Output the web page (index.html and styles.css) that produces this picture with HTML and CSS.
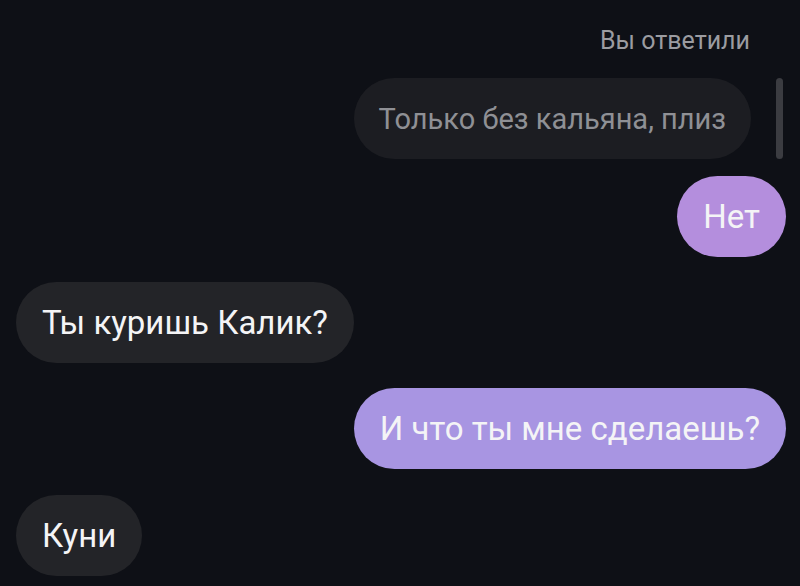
FILE: index.html
```html
<!DOCTYPE html>
<html lang="ru">
<head>
<meta charset="utf-8">
<link rel="stylesheet" href="styles.css">
</head>
<body>
<div class="chat">
  <div class="reply-label">Вы ответили</div>
  <div class="row right quote-row">
    <div class="bubble quote">Только без кальяна, плиз</div>
    <div class="quote-bar"></div>
  </div>
  <div class="row right first-out">
    <div class="bubble out pink">Нет</div>
  </div>
  <div class="row left">
    <div class="bubble in">Ты куришь Калик?</div>
  </div>
  <div class="row right">
    <div class="bubble out violet">И что ты мне сделаешь?</div>
  </div>
  <div class="row left last">
    <div class="bubble in">Куни</div>
  </div>
</div>
</body>
</html>
```

FILE: styles.css
```css
html, body {
  margin: 0;
  padding: 0;
  background: #0e1016;
  width: 800px;
  height: 586px;
  overflow: hidden;
}
.chat {
  display: flex;
  flex-direction: column;
  padding: 25px 16px 0 16px;
  font-family: Roboto, "Noto Sans", sans-serif;
}
.reply-label {
  align-self: flex-end;
  margin-right: 34px;
  color: #9b9ca1;
  font-size: 25px;
  line-height: 32px;
}
.row {
  display: flex;
}
.row.right { justify-content: flex-end; }
.row.left { justify-content: flex-start; }
.quote-row {
  margin-top: 21px;
  align-items: stretch;
  gap: 25px;
  padding-right: 1px;
}
.quote-bar {
  width: 7px;
  border-radius: 4px;
  background: #3b3c41;
}
.bubble {
  height: 81px;
  box-sizing: border-box;
  display: flex;
  align-items: center;
  padding: 0 26px;
  border-radius: 41px;
  font-size: 33px;
  color: #f4f4f6;
  white-space: nowrap;
}
.quote {
  background: #1c1d22;
  color: #8f9095;
  font-size: 29px;
  padding: 0 25px;
}
.first-out { margin-top: 17px; }
.row:nth-child(4), .row:nth-child(5) { margin-top: 25px; }
.row.last { margin-top: 26px; }
.out { margin-right: -2px; }
.pink { background: #b48edd; }
.violet { background: #a895e2; }
.in { background: #232428; }
```
